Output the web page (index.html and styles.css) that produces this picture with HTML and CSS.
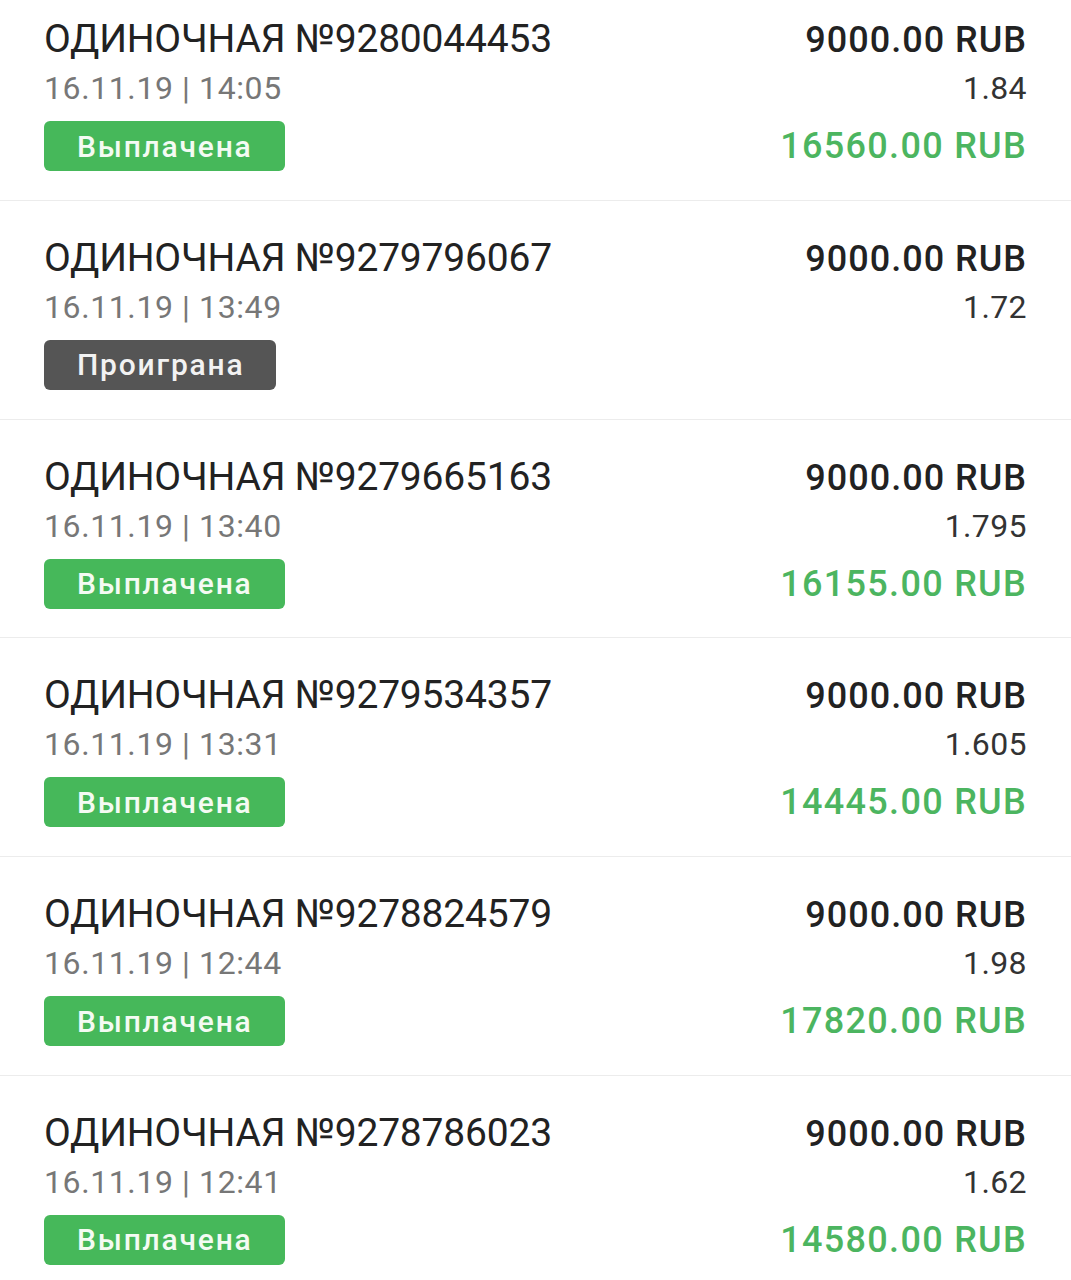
FILE: index.html
```html
<!DOCTYPE html>
<html lang="ru">
<head>
    <meta charset="UTF-8">
    <meta name="viewport" content="width=device-width, initial-scale=1.0">
    <title>История ставок</title>
    <link rel="stylesheet" href="styles.css">
</head>
<body>
    <div class="bets">
        <div class="bet">
            <div class="bet-title">ОДИНОЧНАЯ №9280044453</div>
            <div class="bet-stake">9000.00 RUB</div>
            <div class="bet-date">16.11.19 | 14:05</div>
            <div class="bet-coef">1.84</div>
            <div class="bet-status"><span class="badge won">Выплачена</span></div>
            <div class="bet-win">16560.00 RUB</div>
        </div>
        <div class="bet">
            <div class="bet-title">ОДИНОЧНАЯ №9279796067</div>
            <div class="bet-stake">9000.00 RUB</div>
            <div class="bet-date">16.11.19 | 13:49</div>
            <div class="bet-coef">1.72</div>
            <div class="bet-status"><span class="badge lost">Проиграна</span></div>
            <div class="bet-win"></div>
        </div>
        <div class="bet">
            <div class="bet-title">ОДИНОЧНАЯ №9279665163</div>
            <div class="bet-stake">9000.00 RUB</div>
            <div class="bet-date">16.11.19 | 13:40</div>
            <div class="bet-coef">1.795</div>
            <div class="bet-status"><span class="badge won">Выплачена</span></div>
            <div class="bet-win">16155.00 RUB</div>
        </div>
        <div class="bet">
            <div class="bet-title">ОДИНОЧНАЯ №9279534357</div>
            <div class="bet-stake">9000.00 RUB</div>
            <div class="bet-date">16.11.19 | 13:31</div>
            <div class="bet-coef">1.605</div>
            <div class="bet-status"><span class="badge won">Выплачена</span></div>
            <div class="bet-win">14445.00 RUB</div>
        </div>
        <div class="bet">
            <div class="bet-title">ОДИНОЧНАЯ №9278824579</div>
            <div class="bet-stake">9000.00 RUB</div>
            <div class="bet-date">16.11.19 | 12:44</div>
            <div class="bet-coef">1.98</div>
            <div class="bet-status"><span class="badge won">Выплачена</span></div>
            <div class="bet-win">17820.00 RUB</div>
        </div>
        <div class="bet">
            <div class="bet-title">ОДИНОЧНАЯ №9278786023</div>
            <div class="bet-stake">9000.00 RUB</div>
            <div class="bet-date">16.11.19 | 12:41</div>
            <div class="bet-coef">1.62</div>
            <div class="bet-status"><span class="badge won">Выплачена</span></div>
            <div class="bet-win">14580.00 RUB</div>
        </div>
    </div>
</body>
</html>
```

FILE: styles.css
```css
body {
    margin: 0;
    font-family: Roboto, "Noto Sans", sans-serif;
    background-color: #fff;
    color: #222;
}
.bets {
    overflow: hidden;
}
.bet {
    display: grid;
    grid-template-columns: 1fr auto;
    align-items: baseline;
    padding: 33px 44px 28.8px 44px;
    border-top: 1px solid #ececec;
}
.bet:first-child {
    padding-top: 15px;
    border-top: none;
}
.bet-title {
    font-size: 39px;
    line-height: 48px;
    letter-spacing: -0.2px;
    color: #222;
}
.bet-stake {
    font-size: 36px;
    line-height: 48px;
    font-weight: 500;
    letter-spacing: 1px;
    color: #222;
    text-align: right;
}
.bet-date {
    font-size: 32px;
    line-height: 48px;
    letter-spacing: 0.6px;
    color: #777;
}
.bet-coef {
    font-size: 32px;
    line-height: 48px;
    letter-spacing: 0.4px;
    color: #333;
    text-align: right;
}
.bet-status {
    align-self: center;
    margin-top: 9px;
    height: 50px;
}
.bet-win {
    align-self: center;
    margin-top: 9px;
    font-size: 36px;
    font-weight: 500;
    letter-spacing: 1.3px;
    color: #4cb560;
    text-align: right;
}
.badge {
    display: inline-flex;
    align-items: center;
    height: 50px;
    padding: 0 32px 0 33px;
    border-radius: 6px;
    font-size: 30px;
    font-weight: 500;
    letter-spacing: 1.8px;
    color: #f4fbf3;
}
.won {
    background-color: #46b85a;
}
.lost {
    background-color: #555;
    color: #f2f2f2;
}
```
